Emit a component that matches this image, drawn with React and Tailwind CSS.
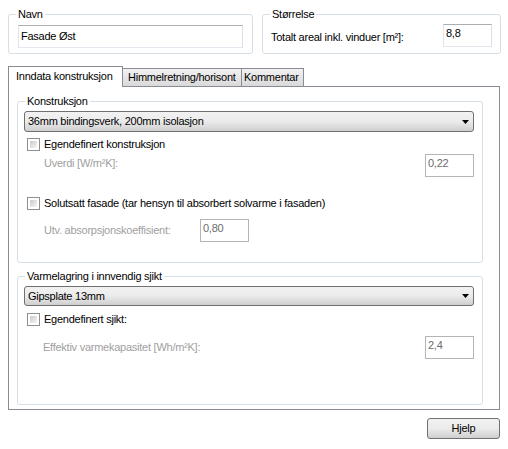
import React from 'react'

const font = { fontFamily: '"Liberation Sans", Arial, sans-serif' }

function Group({ label, className, children }) {
  return (
    <div className={`relative rounded-[3px] border border-[#d5dfe5] ${className}`}>
      <span className="absolute left-[7px] top-[-7px] bg-white px-[2px] leading-[13px]">{label}</span>
      {children}
    </div>
  )
}

function Combo({ value, className }) {
  return (
    <div className={`flex items-center justify-between rounded-[3px] border border-[#707070] bg-gradient-to-b from-[#f2f2f2] via-[#ebebeb] to-[#cfcfcf] pl-[3px] pr-[4px] ${className}`}>
      <span className="leading-[13px]">{value}</span>
      <svg width="7" height="4" viewBox="0 0 7 4">
        <path d="M0 0h7L3.5 4z" fill="#000" />
      </svg>
    </div>
  )
}

function CheckRow({ label, className }) {
  return (
    <div className={`flex items-center ${className}`}>
      <div className="h-[13px] w-[13px] border border-[#8e8f8f] bg-white p-[2px]">
        <div className="h-full w-full bg-gradient-to-br from-[#cbcbcb] to-[#f6f6f6]" />
      </div>
      <span className="ml-[4px] leading-[13px]">{label}</span>
    </div>
  )
}

function Field({ value, disabled, className }) {
  return (
    <div
      className={`border px-[2px] pt-[2px] leading-[13px] ${
        disabled ? 'border-[#b5b5b5] text-[#6d6d6d]' : 'border-[#abadb3] border-l-[#e2e3ea] border-r-[#dbdfe6] border-b-[#e3e9ef]'
      } ${className}`}
    >
      {value}
    </div>
  )
}

export default function App() {
  return (
    <div className="relative h-[449px] w-[508px] bg-white text-[11px] tracking-[-0.25px] text-black" style={font}>
      {/* top group boxes */}
      <div className="flex pl-[8px] pt-[14px]">
        <Group label="Navn" className="h-[40px] w-[245px] pl-[9px] pt-[10px]">
          <div className="flex h-[23px] w-[225px] items-center border border-[#abadb3] border-l-[#e2e3ea] border-r-[#dbdfe6] border-b-[#e3e9ef] px-[2px]">
            <span className="leading-[13px]">Fasade Øst</span>
          </div>
        </Group>
        <Group label="Størrelse" className="ml-[9px] flex h-[40px] w-[239px] items-start pl-[8px] pt-[9px]">
          <span className="mt-[7px] leading-[13px]">Totalt areal inkl. vinduer [m²]:</span>
          <Field value="8,8" className="ml-auto mr-[8px] h-[23px] w-[49px]" />
        </Group>
      </div>

      {/* tabs */}
      <div className="ml-[8px] mt-[12px] flex items-end">
        <div className="relative z-10 mb-[-1px] flex h-[21px] w-[115px] items-start border border-b-0 border-[#898c95] bg-white pl-[7px] pt-[3px]">
          <span className="leading-[13px]">Inndata konstruksjon</span>
        </div>
        <div className="flex h-[18px] w-[119px] items-center border-t border-r border-[#898c95] bg-gradient-to-b from-[#f2f2f2] to-[#d9d9d9] pl-[5px]">
          <span className="leading-[13px]">Himmelretning/horisont</span>
        </div>
        <div className="flex h-[18px] w-[62px] items-center border-t border-r border-[#898c95] bg-gradient-to-b from-[#f2f2f2] to-[#d9d9d9] pl-[2px]">
          <span className="leading-[13px]">Kommentar</span>
        </div>
      </div>

      {/* tab panel */}
      <div className="ml-[8px] flex h-[324px] w-[492px] flex-col border border-[#898c95] pl-[8px] pt-[14px]">
        <Group label="Konstruksjon" className="flex h-[162px] w-[466px] flex-col">
          <Combo value="36mm bindingsverk, 200mm isolasjon" className="ml-[6px] mt-[9px] h-[21px] w-[450px]" />
          <CheckRow label="Egendefinert konstruksjon" className="ml-[9px] mt-[6px]" />
          <div className="mt-[3px] flex h-[23px] items-start">
            <span className="ml-[26px] mt-[3px] leading-[13px] text-[#a0a0a0]">Uverdi [W/m²K]:</span>
            <Field value="0,22" disabled className="ml-auto mr-[8px] h-[23px] w-[49px]" />
          </div>
          <CheckRow label="Solutsatt fasade (tar hensyn til absorbert solvarme i fasaden)" className="ml-[9px] mt-[20px]" />
          <div className="mt-[9px] flex h-[23px] items-center">
            <span className="ml-[26px] w-[156px] leading-[13px] text-[#a0a0a0]">Utv. absorpsjonskoeffisient:</span>
            <Field value="0,80" disabled className="h-[23px] w-[49px]" />
          </div>
        </Group>

        <Group label="Varmelagring i innvendig sjikt" className="mt-[13px] flex h-[129px] w-[466px] flex-col">
          <Combo value="Gipsplate 13mm" className="ml-[6px] mt-[9px] h-[20px] w-[450px]" />
          <CheckRow label="Egendefinert sjikt:" className="ml-[9px] mt-[7px]" />
          <div className="mt-[10px] flex h-[23px] items-center">
            <span className="ml-[25px] leading-[13px] text-[#a0a0a0]">Effektiv varmekapasitet [Wh/m²K]:</span>
            <Field value="2,4" disabled className="ml-auto mr-[8px] h-[23px] w-[49px]" />
          </div>
        </Group>
      </div>

      {/* bottom button */}
      <div className="mt-[8px] flex justify-end pr-[8px]">
        <button
          type="button"
          className="flex h-[21px] w-[73px] items-center justify-center rounded-[3px] border border-[#707070] bg-gradient-to-b from-[#f2f2f2] via-[#ebebeb] to-[#cfcfcf]"
        >
          <span className="leading-[13px]">Hjelp</span>
        </button>
      </div>
    </div>
  )
}
